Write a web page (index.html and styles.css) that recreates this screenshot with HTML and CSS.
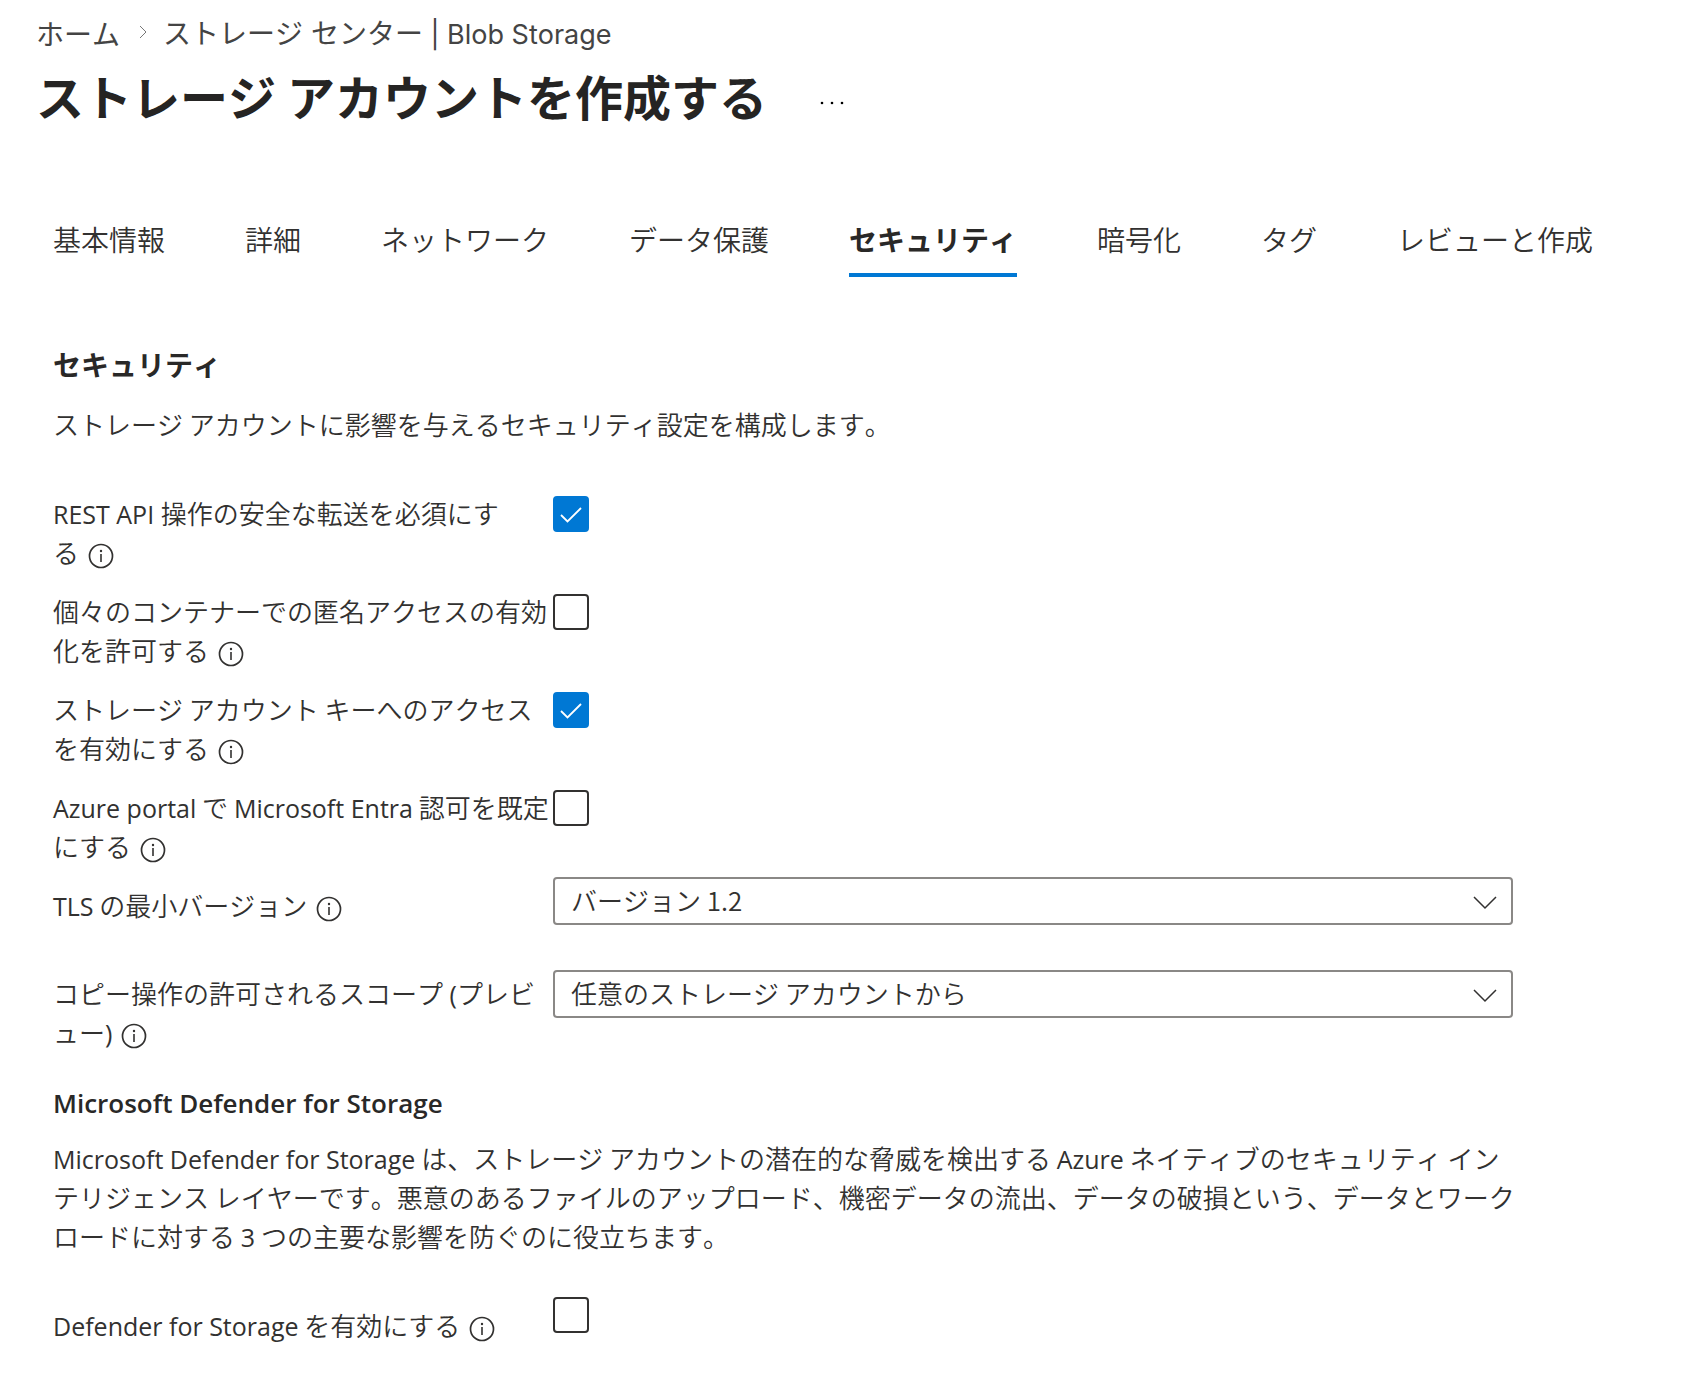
FILE: index.html
```html
<!DOCTYPE html>
<html lang="ja">
<head>
<meta charset="utf-8">
<meta name="viewport" content="width=device-width, initial-scale=1">
<title>ストレージ アカウントを作成する</title>
<link rel="stylesheet" href="styles.css">
</head>
<body>
<svg class="sprite" aria-hidden="true">
  <symbol id="info" viewBox="0 0 26 26">
    <circle cx="13" cy="13" r="11.5" fill="none" stroke="currentColor" stroke-width="1.7"/>
    <circle cx="13" cy="8" r="1.2" fill="currentColor"/>
    <path d="M13 11v8" stroke="currentColor" stroke-width="1.6"/>
  </symbol>
</svg>
<header class="header">
  <nav class="breadcrumb" aria-label="階層リンク">
    <a href="#">ホーム</a>
    <svg class="separator" viewBox="0 0 8 14" aria-hidden="true"><path d="M1 1l6 6-6 6" fill="none" stroke="currentColor"/></svg>
    <a href="#">ストレージ センター<span class="service"> | Blob Storage</span></a>
  </nav>
  <div class="title-row">
    <h1>ストレージ アカウントを作成する</h1>
    <button class="more" type="button" aria-label="その他">
      <svg viewBox="0 0 24 4" aria-hidden="true"><circle cx="2" cy="2" r="1.3"/><circle cx="12" cy="2" r="1.3"/><circle cx="22" cy="2" r="1.3"/></svg>
    </button>
  </div>
</header>
<nav class="tabs" aria-label="作成手順">
  <a href="#">基本情報</a>
  <a href="#">詳細</a>
  <a href="#">ネットワーク</a>
  <a href="#">データ保護</a>
  <a href="#" class="active" aria-current="page">セキュリティ</a>
  <a href="#">暗号化</a>
  <a href="#">タグ</a>
  <a href="#">レビューと作成</a>
</nav>
<main class="panel">
  <h2>セキュリティ</h2>
  <p>ストレージ アカウントに影響を与えるセキュリティ設定を構成します。</p>
  <form class="form">
    <div class="row">
      <div class="caption"><label for="secure"><span class="latin">REST API </span>操作の安全な転送を必須にす<br>る</label> <button class="info" type="button" aria-label="情報"><svg><use href="#info"/></svg></button></div>
      <input class="check" type="checkbox" id="secure" checked>
    </div>
    <div class="row">
      <div class="caption"><label for="anonymous">個々のコンテナーでの匿名アクセスの有効<br>化を許可する</label> <button class="info" type="button" aria-label="情報"><svg><use href="#info"/></svg></button></div>
      <input class="check" type="checkbox" id="anonymous">
    </div>
    <div class="row">
      <div class="caption"><label for="keys">ストレージ アカウント キーへのアクセス<br>を有効にする</label> <button class="info" type="button" aria-label="情報"><svg><use href="#info"/></svg></button></div>
      <input class="check" type="checkbox" id="keys" checked>
    </div>
    <div class="row">
      <div class="caption"><label for="entra"><span class="latin">Azure portal</span> で <span class="latin">Microsoft Entra</span> 認可を既定<br>にする</label> <button class="info" type="button" aria-label="情報"><svg><use href="#info"/></svg></button></div>
      <input class="check" type="checkbox" id="entra">
    </div>
    <div class="row row-tls">
      <div class="caption caption-low"><label for="tls"><span class="latin">TLS</span> の最小バージョン</label> <button class="info" type="button" aria-label="情報"><svg><use href="#info"/></svg></button></div>
      <select class="select" id="tls"><option>バージョン 1.2</option></select>
    </div>
    <div class="row row-scope">
      <div class="caption caption-scope"><label for="scope">コピー操作の許可されるスコープ<span class="latin"> (</span>プレビ<br>ュー<span class="latin">)</span></label> <button class="info" type="button" aria-label="情報"><svg><use href="#info"/></svg></button></div>
      <select class="select" id="scope"><option>任意のストレージ アカウントから</option></select>
    </div>
    <h2><span class="latin-heading">Microsoft Defender for Storage</span></h2>
    <p class="about"><span class="latin">Microsoft Defender for Storage</span> は、ストレージ アカウントの潜在的な脅威を検出する <span class="latin">Azure</span> ネイティブのセキュリティ イン<br>テリジェンス レイヤーです。悪意のあるファイルのアップロード、機密データの流出、データの破損という、データとワーク<br>ロードに対する <span class="latin">3</span> つの主要な影響を防ぐのに役立ちます。</p>
    <div class="row row-defender">
      <div class="caption caption-low"><label for="defender"><span class="latin">Defender for Storage</span> を有効にする</label> <button class="info" type="button" aria-label="情報"><svg><use href="#info"/></svg></button></div>
      <input class="check" type="checkbox" id="defender">
    </div>
  </form>
</main>
</body>
</html>
```
FILE: styles.css
```css
* {
  box-sizing: border-box;
}

body {
  margin: 0;
  background: #fff;
  color: #323130;
  font: 350 26px/39px "Noto Sans CJK JP", sans-serif;
  font-kerning: none;
}

a {
  color: inherit;
  text-decoration: none;
}

button {
  padding: 0;
  border: 0;
  background: none;
  color: inherit;
}

h1,
h2,
p {
  margin: 0;
}

.sprite {
  position: absolute;
  width: 0;
  height: 0;
}

.latin,
.latin-heading {
  font-family: "Open Sans", "Noto Sans", sans-serif;
  font-size: 25px;
  font-weight: 400;
  line-height: 1;
}

.latin-heading {
  font-size: 26px;
  font-weight: 600;
}

.header {
  padding: 14px 36px 0;
}

.breadcrumb {
  display: flex;
  align-items: center;
  color: #444;
  font-family: Inter, "Noto Sans CJK JP", sans-serif;
  font-size: 28px;
  font-weight: 400;
  line-height: 40px;
}

.service {
  font-size: 27px;
}

.separator {
  width: 8px;
  height: 14px;
  margin: 0 16px 6px 19px;
  color: #777;
}

.title-row {
  display: flex;
  align-items: center;
  gap: 53px;
  padding-top: 4px;
}

h1 {
  color: #252423;
  font-size: 48px;
  line-height: 72px;
}

.more svg {
  display: block;
  width: 24px;
  height: 4px;
  margin-top: 16px;
}

.tabs {
  display: flex;
  gap: 80px;
  padding: 87px 53px 0;
  font-size: 28px;
  line-height: 42px;
  white-space: nowrap;
}

.tabs a {
  padding-bottom: 13px;
  border-bottom: 4px solid transparent;
}

.tabs .active {
  border-color: #0078d4;
  color: #292827;
  font-weight: 700;
}

.panel {
  padding: 66px 168px 40px 53px;
}

h2 {
  color: #292827;
  font-size: 28px;
  line-height: 42px;
}

p {
  padding-top: 19px;
}

.about {
  margin-right: -12px;
  padding-top: 16px;
}

.form {
  padding-top: 50px;
}

.row {
  display: grid;
  grid-template-columns: 500px 1fr;
  align-items: start;
  padding-bottom: 20px;
}

.caption {
  white-space: nowrap;
}

.caption-low {
  padding-top: 8px;
}

.caption-scope {
  padding-top: 3px;
}

.row-tls {
  margin-top: -8px;
  padding-bottom: 45px;
}

.row-scope {
  padding-bottom: 29px;
}

.row-defender {
  padding-top: 42px;
}

.info {
  width: 26px;
  height: 26px;
  margin-left: 3px;
  vertical-align: -6px;
}

.info svg {
  display: block;
  width: 26px;
  height: 26px;
}

.check {
  appearance: none;
  width: 36px;
  height: 36px;
  margin: 3px 0 0;
  border: 2px solid #323130;
  border-radius: 4px;
  background: #fff;
}

.row-defender .check {
  margin-top: 0;
}

.check:checked {
  border-color: #0078d4;
  background: #0078d4 url("data:image/svg+xml,%3Csvg xmlns='http://www.w3.org/2000/svg' viewBox='0 0 32 32'%3E%3Cpath d='M6 17l6.5 6.500L26 10' fill='none' stroke='white' stroke-width='1.8'/%3E%3C/svg%3E") center / 32px no-repeat;
}

.select {
  appearance: none;
  width: 100%;
  height: 48px;
  padding: 0 60px 4px 16px;
  border: 2px solid #8a8886;
  border-radius: 4px;
  background: #fff url("data:image/svg+xml,%3Csvg xmlns='http://www.w3.org/2000/svg' viewBox='0 0 26 14'%3E%3Cpath d='M2 1l11 11L24 1' fill='none' stroke='%23323130' stroke-width='1.5'/%3E%3C/svg%3E") right 13px top 17px / 26px 14px no-repeat;
  color: inherit;
  font: inherit;
}
```
